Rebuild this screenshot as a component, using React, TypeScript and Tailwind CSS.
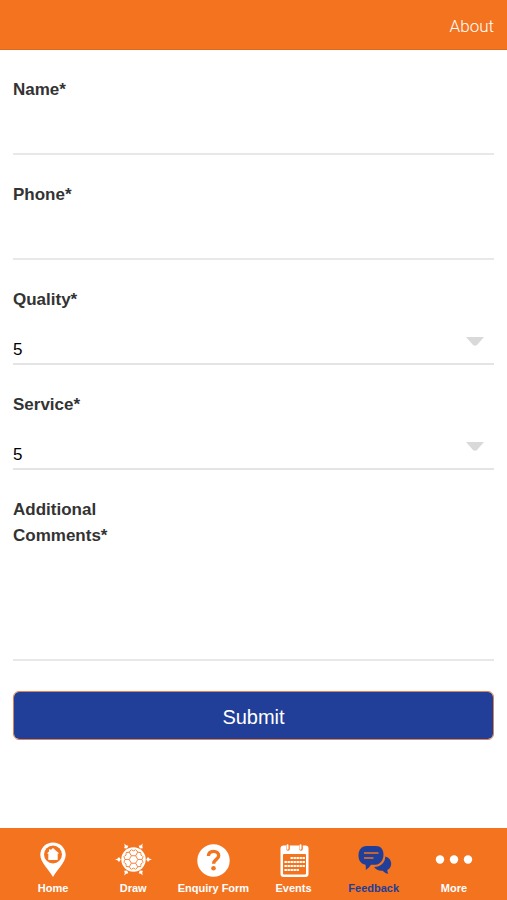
import type { ReactNode } from "react";

const ratings = ["1", "2", "3", "4", "5"];

const HomeIcon = () => (
  <svg viewBox="0 0 40 40" className="h-10 w-10" aria-hidden="true">
    <path
      d="M20 2.500C13 2.500 7.300 8 7.300 14.900c0 7.400 8.700 14.600 12.700 22.100 4-7.500 12.700-14.700 12.700-22.100C32.700 8 27 2.500 20 2.500Z"
      fill="#fff"
    />
    <circle cx="20" cy="14.500" r="9" fill="#f4731f" />
    <path d="M20 8l6.200 5.600h-1.500V20h-9.400v-6.400h-1.500l2.200-2V9.200h1.500v1.100L20 8Z" fill="#fff" />
  </svg>
);

const angles = [0, 60, 120, 180, 240, 300];

const DrawIcon = () => (
  <svg viewBox="0 0 40 40" className="h-10 w-10" aria-hidden="true">
    <circle cx="20.500" cy="19.500" r="12.200" fill="#fff" />
    {angles.map((angle) => (
      <g key={angle} transform={`rotate(${angle} 20.5 19.5)`}>
        <path d="M33.200 19.500l1.800-2.400 1.600 1.600 2.400.8-2.400.8-1.600 1.600Z" fill="#fff" />
        <path
          d="M24.800 19.500h4.200M29 19.500l1.200-3.200M29 19.500l1.200 3.200M24.800 19.500l-2.100 3.700"
          fill="none"
          stroke="#f4731f"
          strokeWidth="0.800"
        />
        <path d="M28 15.200l1.600 1M28 23.800l1.600-1" stroke="#f4731f" strokeWidth="0.800" />
      </g>
    ))}
  </svg>
);

const EnquiryIcon = () => (
  <svg viewBox="0 0 40 40" className="h-10 w-10" aria-hidden="true">
    <circle cx="20.500" cy="20.500" r="16.200" fill="#fff" />
    <path
      d="M15.400 16c.2-3 2.300-4.600 5.200-4.600s5.100 1.700 5.100 4.300c0 3.500-5.100 4-5.100 8"
      fill="none"
      stroke="#f4731f"
      strokeWidth="3.400"
    />
    <circle cx="20.500" cy="28.200" r="2.300" fill="#f4731f" />
  </svg>
);

const EventsIcon = () => (
  <svg viewBox="0 0 40 40" className="h-10 w-10" aria-hidden="true">
    <rect x="6.500" y="5.500" width="28" height="31.500" rx="3" fill="#fff" />
    <rect x="9" y="14" width="23" height="20.500" rx="1" fill="#f4731f" />
    <path d="M14 5v4M27 5v4" stroke="#f4731f" strokeWidth="3.600" strokeLinecap="round" />
    <path d="M13.500 5.200v3.600M26.500 5.200v3.600" stroke="#fff" strokeWidth="2" strokeLinecap="round" />
    <path
      d="M16.500 18h14.500M10.500 22h20.500M10.500 26h20.500M10.500 30h14.500"
      stroke="#fff"
      strokeWidth="2.200"
      strokeDasharray="2.400 0.600"
    />
  </svg>
);

const FeedbackIcon = () => (
  <svg viewBox="0 0 40 40" className="h-10 w-10" aria-hidden="true">
    <path
      d="M31.300 16.500c3.500.8 5.900 3.500 5.900 7.200 0 2.900-1.500 5.200-3.900 6.300 0 1.400.3 2.700 1 3.800-2.400-.4-4.300-1.500-5.600-3.100-4 .3-7-1-8.600-3.600 6.500-.2 11.100-4.200 11.200-10.600Z"
      fill="#213f99"
    />
    <path
      d="M12.500 6H22c4.500 0 7.500 3.200 7.500 8.500S26.500 24.500 21.500 24.800H17c-1.500 2.300-3 3.900-5.200 5.100.2-1.800.1-3.300-.3-5.200C7 24 4.500 20.500 4.500 15.500 4.500 10 7.500 6 12.500 6Z"
      fill="#213f99"
    />
    <path d="M10 13h14.500M10 18h9.500" stroke="#f4731f" strokeWidth="1.400" />
  </svg>
);

const MoreIcon = () => (
  <svg viewBox="0 0 40 40" className="h-10 w-10" aria-hidden="true">
    <circle cx="6" cy="19.500" r="4.200" fill="#fff" />
    <circle cx="20" cy="19.500" r="4.200" fill="#fff" />
    <circle cx="34" cy="19.500" r="4.200" fill="#fff" />
  </svg>
);

const navItems = [
  { label: "Home", icon: <HomeIcon /> },
  { label: "Draw", icon: <DrawIcon /> },
  { label: "Enquiry Form", icon: <EnquiryIcon /> },
  { label: "Events", icon: <EventsIcon /> },
  { label: "Feedback", icon: <FeedbackIcon />, active: true },
  { label: "More", icon: <MoreIcon /> },
];

const Field = ({ id, label, children }: { id: string; label: string; children: ReactNode }) => (
  <div className="flex flex-col">
    <label htmlFor={id} className="w-32 text-[17px] leading-[26px] font-bold text-[#333]">
      {label}
    </label>
    {children}
  </div>
);

const TextField = ({ id, label, type }: { id: string; label: string; type: string }) => (
  <Field id={id} label={label}>
    <input
      id={id}
      type={type}
      required
      className="h-[52px] w-full border-b-2 border-[#e8e8e8] pt-5 text-[17px] text-black outline-none"
    />
  </Field>
);

const RatingField = ({ id, label }: { id: string; label: string }) => (
  <Field id={id} label={label}>
    <div className="relative">
      <select
        id={id}
        defaultValue="5"
        className="block h-[52px] w-full appearance-none border-b-2 border-[#e4e4e4] bg-transparent pt-6 text-[17px] text-black outline-none"
      >
        {ratings.map((rating) => (
          <option key={rating}>{rating}</option>
        ))}
      </select>
      <svg
        viewBox="0 0 18 9"
        className="pointer-events-none absolute top-6 right-2.5 h-[9px] w-[18px]"
        aria-hidden="true"
      >
        <path d="M0 0h18l-7 8q-2 1.500-4 0Z" fill="#d9d9d9" />
      </svg>
    </div>
  </Field>
);

export default function App() {
  return (
    <div className="flex min-h-screen flex-col bg-white font-['Liberation_Sans',Arial,sans-serif]">
      <header className="flex h-[50px] items-center justify-end border-b border-[#e0691c] bg-[#f4731f] px-[13px] pt-0.5">
        <a href="#about" className="font-[Roboto,sans-serif] text-[17px] leading-6 font-light text-white">
          About
        </a>
      </header>

      <form
        className="flex flex-col gap-[27px] px-[13px] py-[27px]"
        onSubmit={(event) => event.preventDefault()}
      >
        <TextField id="name" label="Name*" type="text" />
        <TextField id="phone" label="Phone*" type="tel" />
        <RatingField id="quality" label="Quality*" />
        <RatingField id="service" label="Service*" />
        <Field id="comments" label="Additional Comments*">
          <textarea
            id="comments"
            required
            className="h-[112px] w-full resize-none border-b-2 border-[#e8e8e8] text-[17px] text-black outline-none"
          />
        </Field>
        <button
          type="submit"
          className="mt-[3px] h-[49px] w-full rounded-md border border-[#e0824f] bg-[#213f99] bg-clip-padding pt-0.5 text-[20px] text-white"
        >
          Submit
        </button>
      </form>

      <nav className="mt-auto grid grid-cols-6 bg-[#f4731f] px-[13px] pt-3 pb-1">
        {navItems.map(({ label, icon, active }) => (
          <a
            key={label}
            href="#"
            aria-current={active ? "page" : undefined}
            className={`flex flex-col items-center text-[11px] leading-4 font-bold whitespace-nowrap ${
              active ? "text-[#213f99]" : "text-white"
            }`}
          >
            {icon}
            {label}
          </a>
        ))}
      </nav>
    </div>
  );
}
